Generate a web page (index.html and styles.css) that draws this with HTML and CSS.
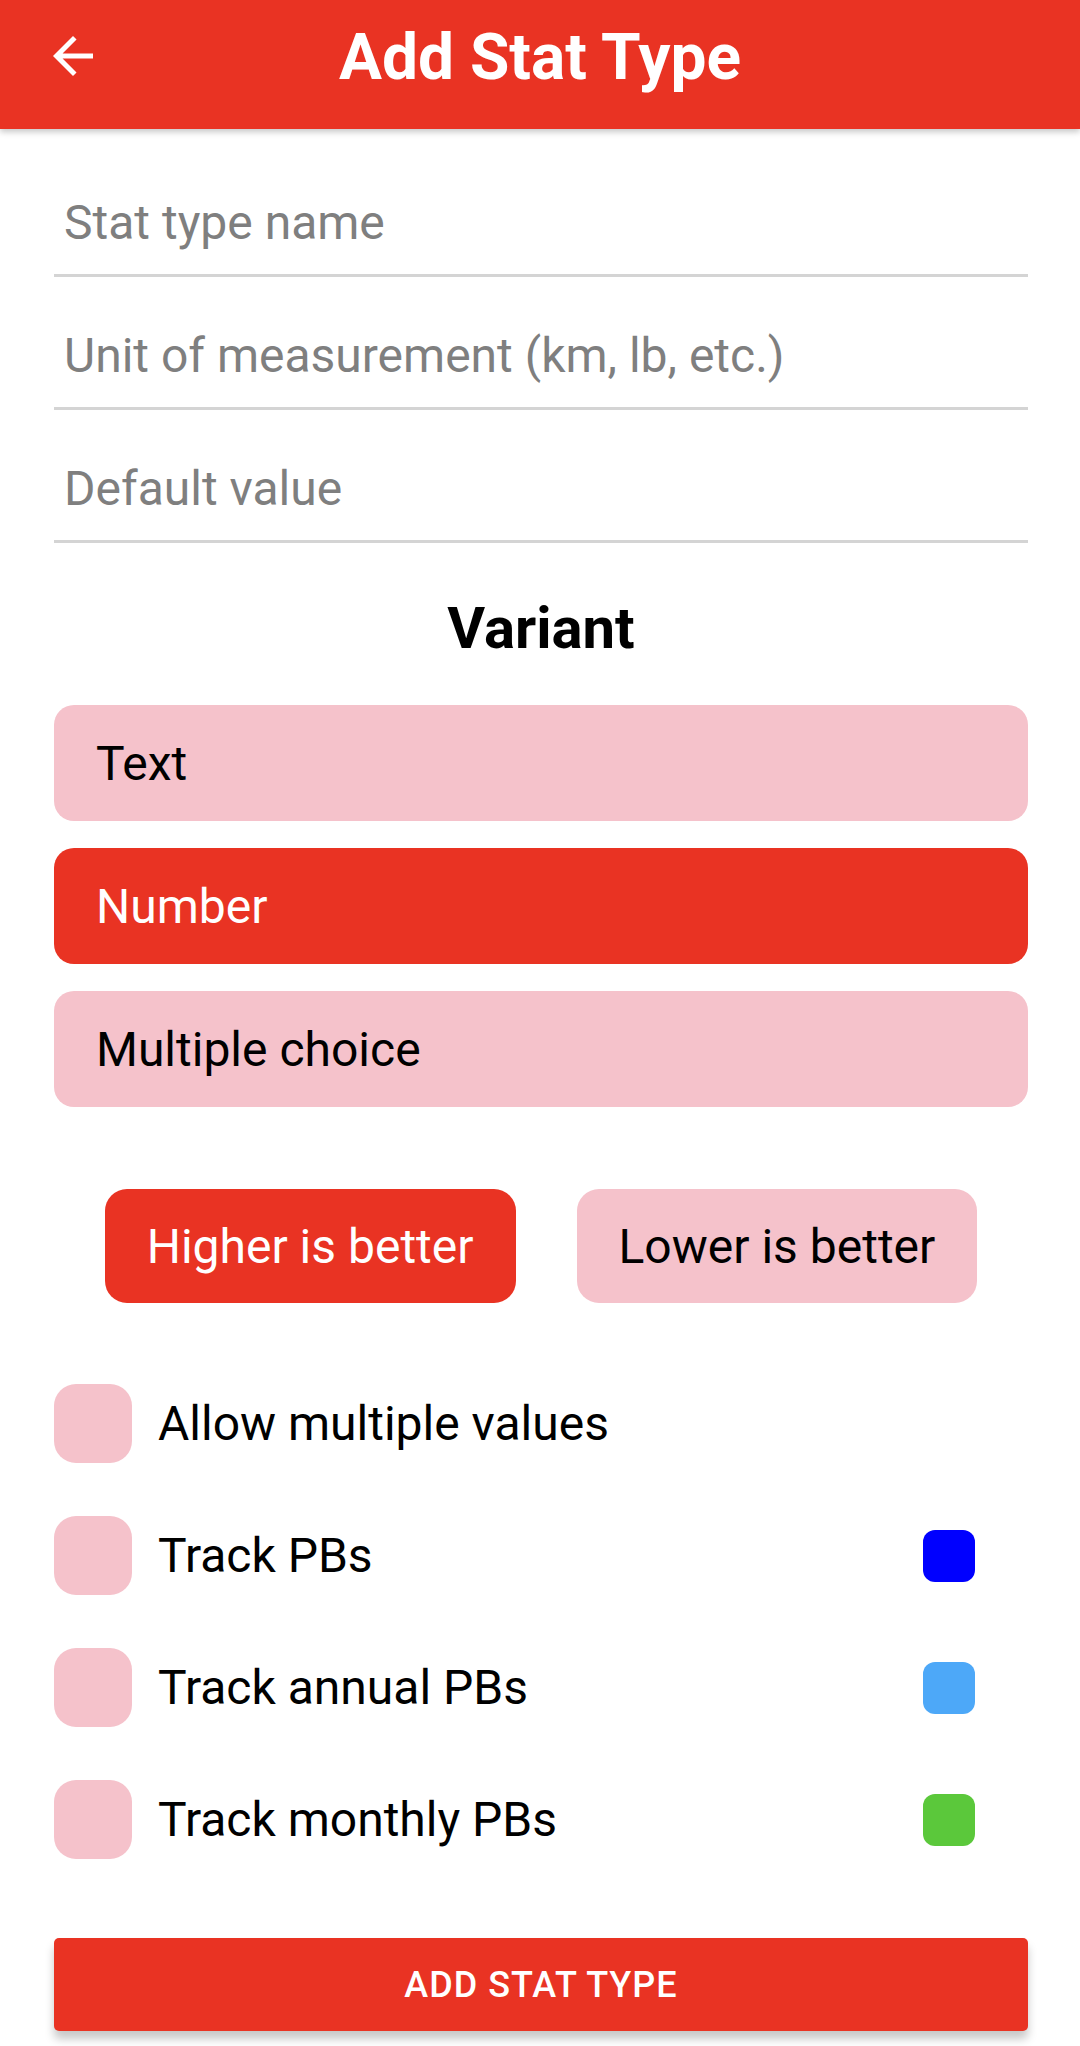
FILE: index.html
```html
<!DOCTYPE html>
<html>
<head>
<meta charset="utf-8">
<link rel="stylesheet" href="styles.css">
</head>
<body>
<header class="appbar">
  <svg class="back" viewBox="0 0 24 24" width="60" height="60"><path d="M20 11H7.83l5.59-5.59L12 4l-8 8 8 8 1.41-1.41L7.83 13H20v-2z" fill="#fff"/></svg>
  <h1 class="title">Add Stat Type</h1>
</header>
<main class="content">
  <div class="field"><span class="placeholder">Stat type name</span></div>
  <div class="field"><span class="placeholder">Unit of measurement (km, lb, etc.)</span></div>
  <div class="field"><span class="placeholder">Default value</span></div>

  <h2 class="section">Variant</h2>
  <div class="variants">
    <div class="variant">Text</div>
    <div class="variant active">Number</div>
    <div class="variant">Multiple choice</div>
  </div>

  <div class="toggle-row">
    <div class="pill active">Higher is better</div>
    <div class="pill">Lower is better</div>
  </div>

  <div class="checks">
    <div class="check-row"><span class="box"></span><span class="label">Allow multiple values</span></div>
    <div class="check-row"><span class="box"></span><span class="label">Track PBs</span><span class="swatch blue"></span></div>
    <div class="check-row"><span class="box"></span><span class="label">Track annual PBs</span><span class="swatch sky"></span></div>
    <div class="check-row"><span class="box"></span><span class="label">Track monthly PBs</span><span class="swatch green"></span></div>
  </div>

  <button class="submit">Add Stat Type</button>
</main>
</body>
</html>
```
FILE: styles.css
```css
* { box-sizing: border-box; }
html, body { margin: 0; padding: 0; }
body {
  width: 1080px;
  height: 2046px;
  overflow: hidden;
  background: #fff;
  font-family: Roboto, "Noto Sans", sans-serif;
  color: #000;
}
.appbar {
  position: relative;
  height: 129px;
  background: #e93323;
  box-shadow: 0 3px 6px rgba(0,0,0,0.22);
  display: flex;
  align-items: center;
  justify-content: center;
}
.back {
  position: absolute;
  left: 43px;
  top: 26px;
}
.title {
  margin: 0;
  color: #fff;
  font-size: 64px;
  font-weight: 700;
  line-height: 74px;
  padding-bottom: 14px;
}
.content {
  padding: 15px 52px 0 54px;
}
.field {
  height: 133px;
  padding: 51px 10px 24px;
  border-bottom: 3px solid #d4d4d4;
  font-size: 48px;
  line-height: 56px;
  color: #7f7f7f;
}
.section {
  margin: 51px 0 0;
  text-align: center;
  font-size: 58px;
  font-weight: 700;
  line-height: 68px;
}
.variants {
  margin-top: 43px;
  display: flex;
  flex-direction: column;
  gap: 27px;
}
.variant {
  height: 116px;
  border-radius: 20px;
  background: #f5c2cb;
  padding-left: 42px;
  display: flex;
  align-items: center;
  font-size: 48px;
}
.variant.active, .pill.active {
  background: #e93323;
  color: #fff;
}
.toggle-row {
  margin-top: 82px;
  display: flex;
  justify-content: center;
  gap: 61px;
}
.pill {
  height: 114px;
  padding: 0 42px;
  border-radius: 22px;
  background: #f5c2cb;
  display: flex;
  align-items: center;
  font-size: 48px;
}
.checks {
  margin-top: 81px;
  display: flex;
  flex-direction: column;
  gap: 53px;
}
.check-row {
  height: 79px;
  display: flex;
  align-items: center;
  padding-right: 53px;
}
.box {
  width: 78px;
  height: 79px;
  border-radius: 22px;
  background: #f5c2cb;
  flex: none;
}
.label {
  margin-left: 26px;
  flex: 1;
  font-size: 48px;
}
.swatch {
  width: 52px;
  height: 52px;
  border-radius: 12px;
  flex: none;
}
.swatch.blue { background: #0000ff; }
.swatch.sky { background: #4da8f8; }
.swatch.green { background: #5bc83b; }
.submit {
  display: block;
  width: 100%;
  margin-top: 79px;
  height: 93px;
  border: 0;
  border-radius: 5px;
  background: #e93323;
  color: #fff;
  font-family: Roboto, sans-serif;
  font-weight: 500;
  font-size: 36px;
  letter-spacing: 1px;
  text-transform: uppercase;
  box-shadow: 0 8px 10px rgba(0,0,0,0.22);
}
```
